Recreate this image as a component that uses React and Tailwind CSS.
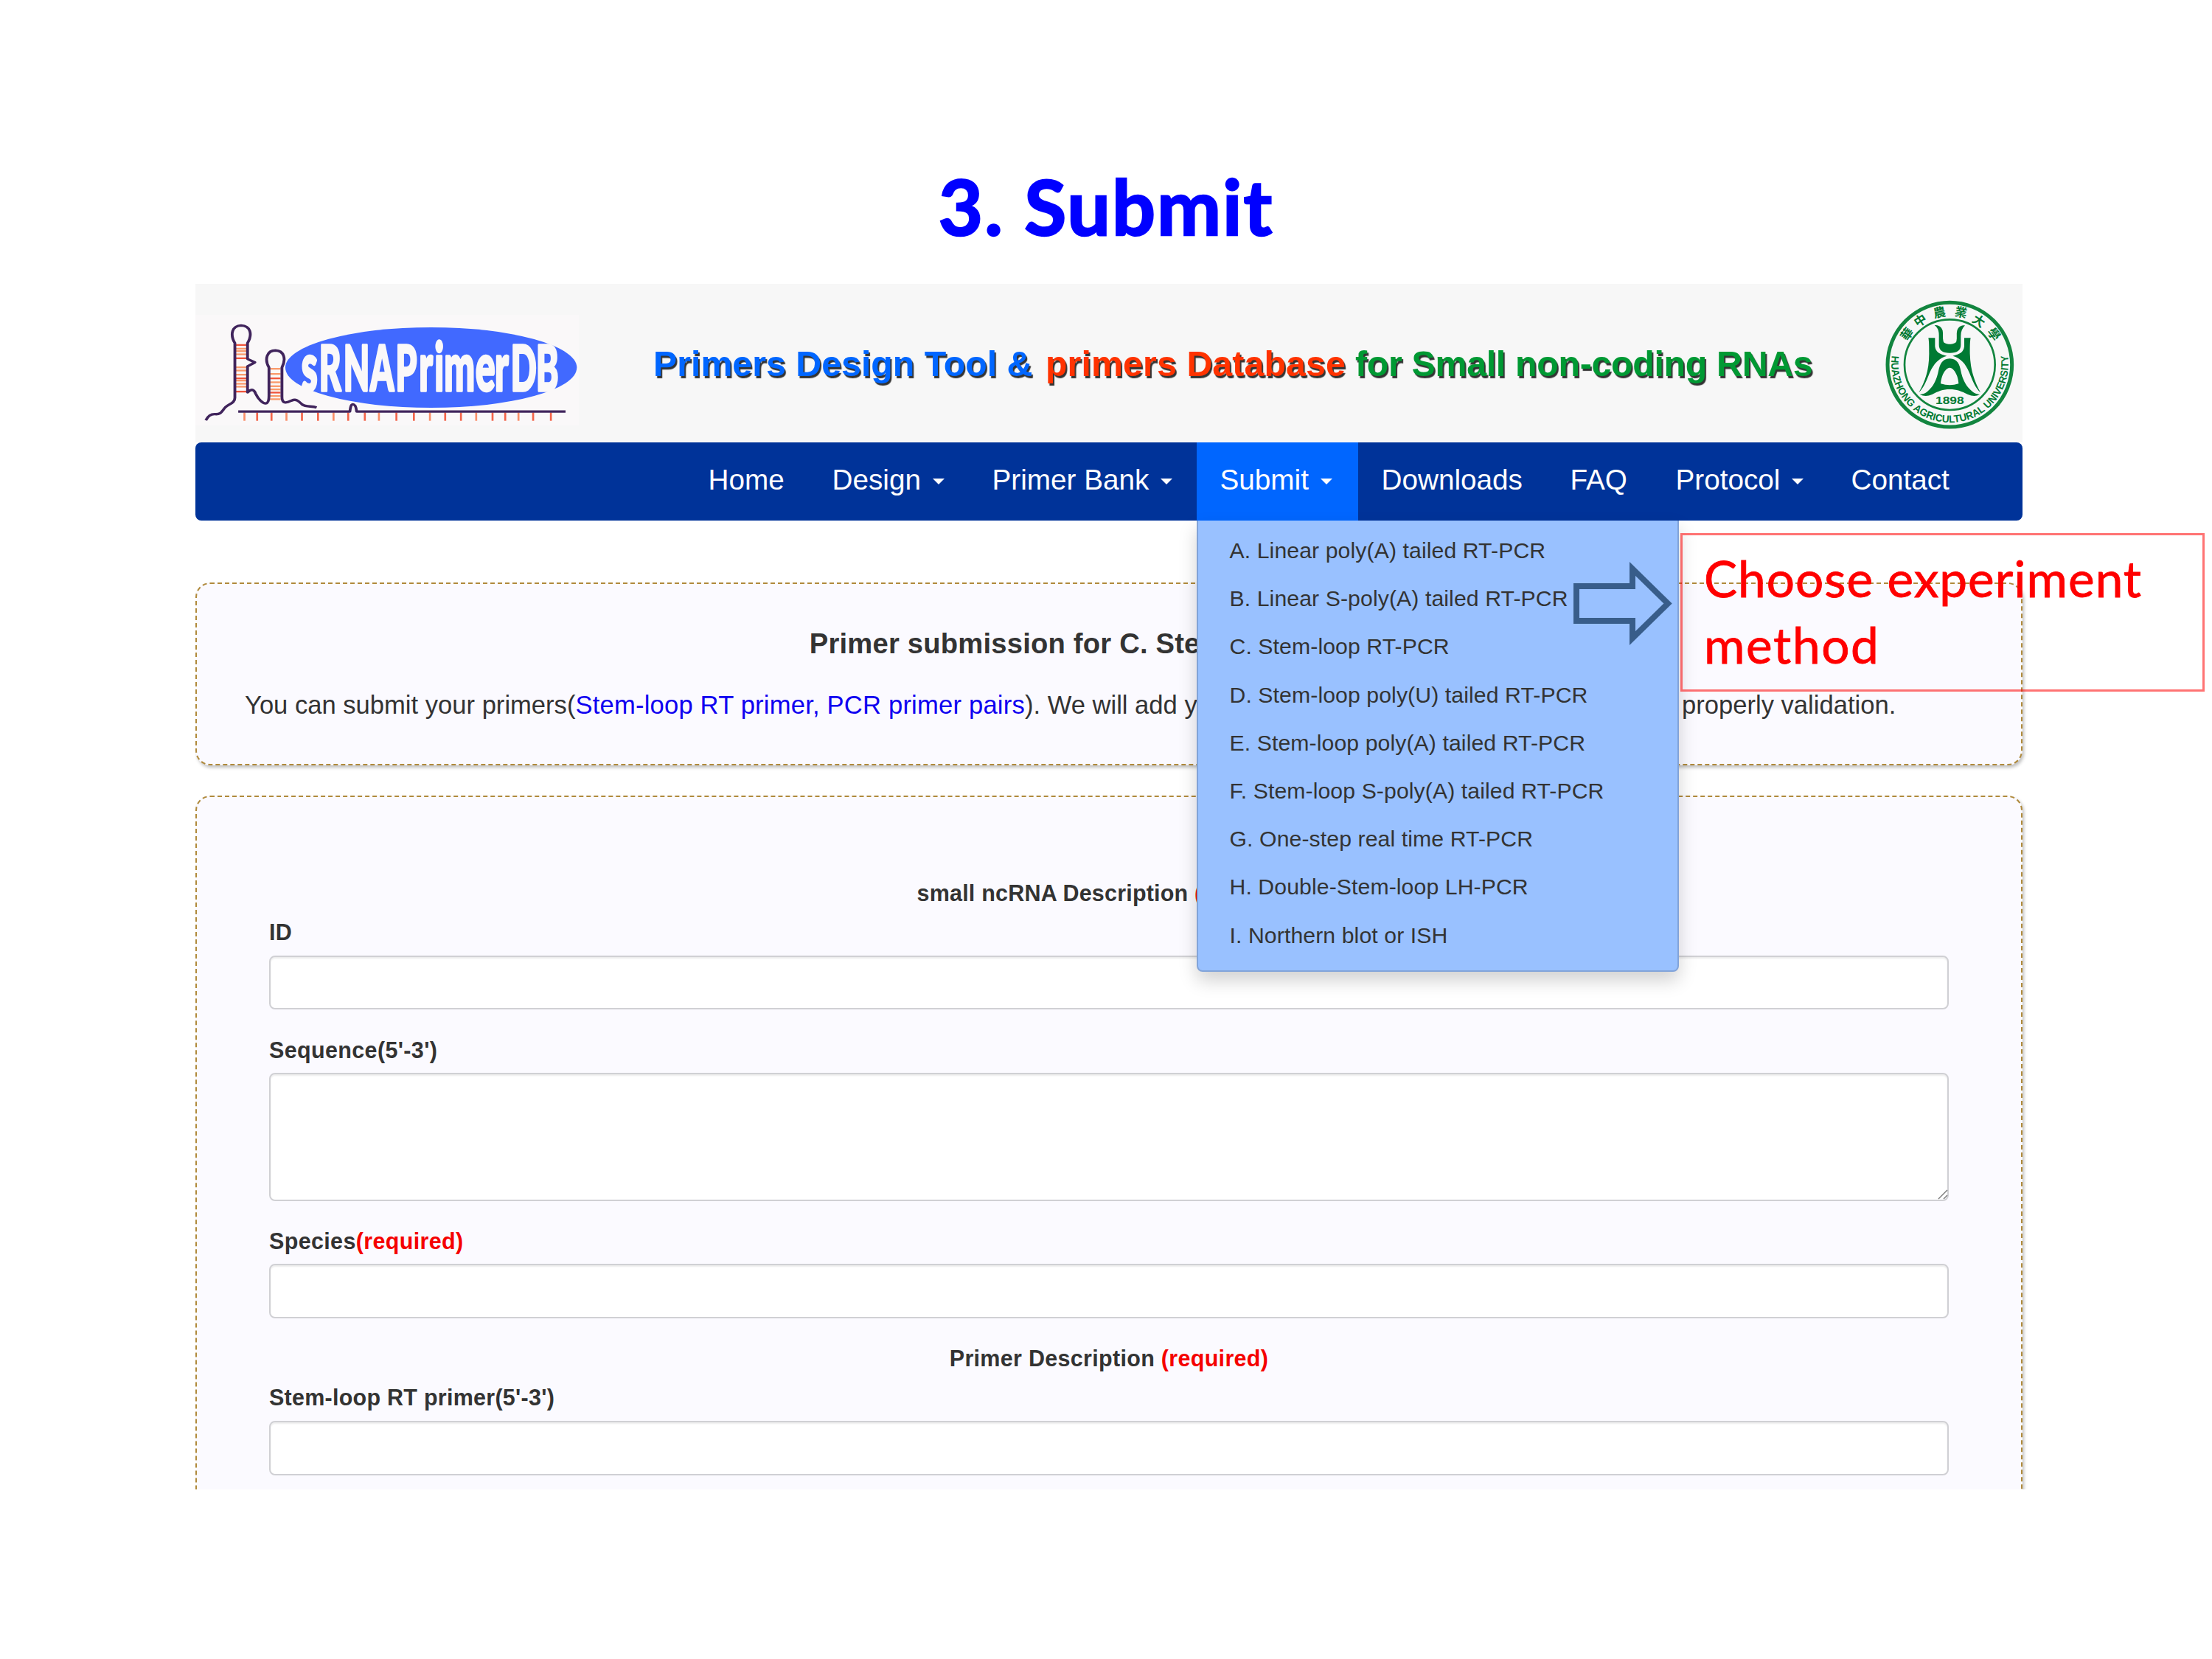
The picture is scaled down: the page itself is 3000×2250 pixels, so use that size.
import React from "react";

const NAV = [
  { label: "Home", box: "w-[168px] pl-[33px]" },
  { label: "Design", caret: true, box: "w-[217px] pl-[33px]" },
  { label: "Primer Bank", caret: true, box: "w-[310px] pl-[33px]" },
  { label: "Submit", caret: true, open: true, box: "w-[219px] pl-[32px]" },
  { label: "Downloads", box: "w-[254px] pl-[32px]" },
  { label: "FAQ", box: "w-[144px] pl-[34px]" },
  { label: "Protocol", caret: true, box: "w-[238px] pl-[33px]" },
  { label: "Contact", box: "w-[200px] pl-[33px]" },
];

const METHODS = [
  "A. Linear poly(A) tailed RT-PCR",
  "B. Linear S-poly(A) tailed RT-PCR",
  "C. Stem-loop RT-PCR",
  "D. Stem-loop poly(U) tailed RT-PCR",
  "E. Stem-loop poly(A) tailed RT-PCR",
  "F. Stem-loop S-poly(A) tailed RT-PCR",
  "G. One-step real time RT-PCR",
  "H. Double-Stem-loop LH-PCR",
  "I. Northern blot or ISH",
];

const TICKS = [212, 257, 308, 361, 416, 473, 528, 580, 639, 689, 751, 813, 870, 924, 980, 1034, 1092, 1137, 1184, 1236, 1299];
const RUNGS_A = [293, 308, 318, 331, 347, 384, 397, 414, 429, 438, 451, 463, 483];
const RUNGS_B = [390, 411, 429, 445, 461, 474, 487, 501, 514];

// Horizontal squeeze of the wordmark and the left edge of each of its letters.
const SQUEEZE = 0.47;
const at = (...xs) => xs.map((x) => x / SQUEEZE).join(" ");

function Logo() {
  return (
    <svg className="block h-[153px] w-[520px]" viewBox="38 170 1360 460" preserveAspectRatio="none">
      <rect x="38" y="170" width="1360" height="450" fill="#faf8f9" />
      <ellipse cx="874" cy="385" rx="517" ry="164" fill="#4169ff" />
      <g strokeWidth="7">
        {RUNGS_A.map((y, i) => (
          <path key={y} d={`M181 ${y}H220`} stroke={i % 4 === 0 ? "#f0553c" : "#fa9a6c"} />
        ))}
        {RUNGS_B.map((y, i) => (
          <path key={y} d={`M303 ${y}H340`} stroke={i % 4 === 2 ? "#f0553c" : "#fa9a6c"} />
        ))}
        {TICKS.map((x, i) => (
          <path key={x} d={`M${x} 568V602`} stroke={i % 3 === 0 ? "#f98e68" : "#f2644a"} />
        ))}
      </g>
      <g fill="none" stroke="#40245c" strokeWidth="10" strokeLinejoin="round">
        <path d="M75 600C84 580 94 574 108 575C130 577 132 562 145 546C158 533 178 530 178 508V285C160 250 168 214 200 213C234 214 241 250 223 285V350L249 364L223 380V486C238 470 246 474 252 492C262 516 277 532 288 531C298 530 299 515 299 500V385C282 350 292 315 322 315C354 316 360 352 345 385V505C345 536 365 528 378 520C398 510 406 524 416 535C432 548 450 540 468 548" />
        <path d="M190 564H586C588 546 590 535 597 535C605 535 608 546 610 564H1351" />
      </g>
      <text
        transform={`scale(${SQUEEZE} 1)`}
        y="480"
        fontSize="256"
        fill="#faf8f9"
        stroke="#faf8f9"
        strokeWidth="11"
        strokeLinejoin="round"
        className="font-['Lato',sans-serif] font-black"
      >
        <tspan x={at(414)} fontSize="276">s</tspan>
        <tspan x={at(477, 563, 658, 748)}>RNAP</tspan>
        <tspan x={at(831, 886, 920, 1032, 1100)} fontSize="276">rimer</tspan>
        <tspan x={at(1157, 1246)}>DB</tspan>
      </text>
    </svg>
  );
}

const SEAL_CHARS = [
  ["華", 318, 220, -54],
  ["中", 372, 165, -34],
  ["農", 450, 132, -11],
  ["業", 538, 132, 11],
  ["大", 610, 167, 33],
  ["學", 672, 221, 54],
];

function Seal() {
  return (
    <svg className="block h-[175px] w-[175px]" viewBox="230 82 525 525">
      <g fill="none" stroke="#12853f">
        <circle cx="492" cy="345" r="253" strokeWidth="15" />
        <circle cx="492" cy="345" r="184" strokeWidth="8" />
      </g>
      <g fill="#007a33">
        <path d="M430 184C445 184 458 189 463 206C466 220 462 236 466 250C471 265 513 265 519 250C523 236 518 220 522 206C527 190 538 185 554 185C543 196 537 210 537 228V264C537 286 522 297 492 297C463 297 448 286 448 264V226C448 205 442 194 430 184Z" />
        <path d="M405 236H432V270C434 292 450 302 480 309C448 318 428 340 412 374C398 406 388 438 366 458C390 416 408 370 408 300C408 270 408 250 405 236Z" />
        <path d="M577 236H551V270C549 292 534 302 504 309C536 318 556 340 570 374C584 406 594 438 617 458C594 416 576 370 574 300C574 270 574 250 577 236Z" />
        <path fillRule="evenodd" d="M492 320C524 321 532 345 537 370C543 400 556 432 583 453C592 462 602 464 614 466C600 474 584 474 566 466C540 453 520 445 492 445C464 445 444 453 420 466C402 474 386 474 370 466C384 464 393 461 402 453C428 432 440 400 446 370C452 345 460 321 492 320ZM492 357C474 358 457 390 455 422C480 430 504 430 528 422C526 390 510 358 492 357Z" />
        <text x="492" y="505" textAnchor="middle" fontSize="42" textLength="116" lengthAdjust="spacingAndGlyphs" className="font-['Liberation_Sans',sans-serif] font-bold">
          1898
        </text>
        {SEAL_CHARS.map(([c, x, y, r]) => (
          <text
            key={c}
            x={x}
            y={y + 18}
            transform={`rotate(${r} ${x} ${y})`}
            textAnchor="middle"
            fontSize="50"
            className="font-['Noto_Sans_CJK_TC',sans-serif] font-bold"
          >
            {c}
          </text>
        ))}
        <path id="seal-arc" d="M257 308A238 238 0 1 0 728 308" fill="none" />
        <text fontSize="42" className="font-['Liberation_Sans',sans-serif] font-bold">
          <textPath href="#seal-arc" textLength="818" lengthAdjust="spacingAndGlyphs">
            HUAZHONG AGRICULTURAL UNIVERSITY
          </textPath>
        </text>
      </g>
    </svg>
  );
}

function Caret() {
  return <span className="ml-[16px] h-0 w-0 border-x-8 border-t-8 border-x-transparent border-t-white" />;
}

function MethodMenu() {
  return (
    <ul className="absolute top-[106px] left-0 z-10 h-[612px] w-[654px] rounded-b-lg border-2 border-t-0 border-black/15 bg-[#99c1ff] pt-[8px] shadow-[0_12px_24px_rgba(0,0,0,0.18)]">
      {METHODS.map((m) => (
        <li key={m} className="h-[65.2px] pl-[43px] text-[30.2px] leading-[65.2px] tracking-[0.1px] whitespace-nowrap text-[#333]">
          {m}
        </li>
      ))}
    </ul>
  );
}

function NavBar() {
  return (
    <nav className="flex h-[106px] w-[2478px] rounded-lg bg-[#003399] pl-[663px]">
      {NAV.map((item) => (
        <div
          key={item.label}
          className={`relative -left-[0.5px] flex h-full items-center text-[38.7px] leading-[54px] whitespace-nowrap text-white ${item.box} ${item.open ? "bg-[#0066ff]" : ""}`}
        >
          <span className="-mt-1">{item.label}</span>
          {item.caret && <Caret />}
          {item.open && <MethodMenu />}
        </div>
      ))}
    </nav>
  );
}

function Required() {
  return <span className="text-[#f50000]">(required)</span>;
}

const PANEL = "w-[2478px] rounded-[20px] border-2 border-dashed border-[#b08a3c] bg-[#fbfaff] shadow-[2px_3px_4px_rgba(0,0,0,0.25)]";
const TEXT = "block h-[40px] text-[30.5px] font-bold leading-[40px] whitespace-nowrap";
const LABEL = `${TEXT} tracking-[0.35px]`;
const HEADING = `${TEXT} tracking-[0.3px] text-center`;
const FIELD = "block w-[2278px] rounded-lg border-2 border-[#d0d0d4] bg-white shadow-[inset_0_2px_2px_rgba(0,0,0,0.075)] outline-none resize-none";

export default function App() {
  return (
    <div className="relative h-[2250px] w-[3000px] overflow-hidden bg-white font-['Liberation_Sans',Arial,sans-serif] text-[#333]">
      <h1 className="flex h-[385px] justify-center pt-[219px] font-['Lato',sans-serif] text-[104px] leading-[120px] font-bold tracking-[2px] text-[#0000ff] [-webkit-text-stroke:2.5px_#0000ff]">
        <span>3. Submit</span>
      </h1>

      <div className="ml-[265px] h-[1635px] w-[2486px] overflow-hidden">
        <header className="flex h-[215px] w-[2478px] bg-[#f7f7f7]">
          <div className="mt-[42px] w-[621px]">
            <Logo />
          </div>
          <div className="flex pt-[79px] text-[48.3px] leading-[58px] font-bold whitespace-pre [text-shadow:2px_3px_1px_#333]">
            <span className="w-[532px] text-[#0066ff]">Primers Design Tool &amp;</span>
            <span className="w-[420px] tracking-[0.1px] text-[#ff3300]">primers Database</span>
            <span className="tracking-[-0.3px] text-[#009933]">for Small non-coding RNAs</span>
          </div>
          <div className="mt-[22px] ml-auto mr-[11px]">
            <Seal />
          </div>
        </header>

        <NavBar />

        <section className={`mt-[84px] h-[248px] pt-[55px] ${PANEL}`}>
          <h2 className="text-center text-[38.2px] leading-[52px] font-bold tracking-[0.2px]">Primer submission for C. Stem-loop RT-PCR</h2>
          <p className="mt-[32px] flex pl-[65px] text-[34.6px] leading-[50px] whitespace-pre">
            <span className="w-[1949px]">
              You can submit your primers(<span className="tracking-[0.2px] text-[#0f00f0]">Stem-loop RT primer, PCR primer pairs</span>
              ). We will add your primers to our database after
            </span>
            <span>properly validation.</span>
          </p>
        </section>

        <section className={`mt-[41px] h-[1000px] px-[98px] pt-[110px] ${PANEL}`}>
          <h3 className={`${TEXT} text-center tracking-[0.2px]`}>
            small ncRNA Description <Required />
          </h3>
          <label className={`mt-[13px] ${LABEL}`}>ID</label>
          <input className={`mt-[12px] h-[73px] ${FIELD}`} />
          <label className={`mt-[35px] ${LABEL}`}>Sequence(5'-3')</label>
          <div className="relative mt-[11px]">
            <textarea className={`h-[174px] ${FIELD}`} />
            <svg className="absolute right-[1px] bottom-[2px] h-[14px] w-[14px]" viewBox="0 0 14 14" fill="none" stroke="#777" strokeWidth="1.4">
              <path d="M1 13L13 1M8 13L13 8" />
            </svg>
          </div>
          <label className={`mt-[34px] ${LABEL}`}>
            Species
            <Required />
          </label>
          <input className={`mt-[11px] h-[74px] ${FIELD}`} />
          <h3 className={`mt-[34px] ${HEADING}`}>
            Primer Description <Required />
          </h3>
          <label className={`mt-[13px] ${TEXT} tracking-[0.25px]`}>Stem-loop RT primer(5'-3')</label>
          <input className={`mt-[12px] h-[74px] ${FIELD}`} />
        </section>
      </div>

      <svg className="absolute top-[755px] left-[2124px] z-20 h-[126px] w-[150px]" viewBox="2124 755 150 126">
        <path d="M2138 795H2214V771.5L2262 818.5L2214 865.5V842H2138Z" fill="none" stroke="#385d8a" strokeWidth="8" />
      </svg>

      <div className="absolute top-[723px] left-[2279px] z-20 h-[215px] w-[711px] border-[3px] border-[#ff0000]/55 pt-[13px] pl-[29px] font-['Lato',sans-serif] text-[67.5px] leading-[90px] tracking-[1px] whitespace-nowrap text-[#ff0000] [-webkit-text-stroke:0.8px_#ff0000]">
        <div>Choose experiment</div>
        <div className="tracking-[1.6px]">method</div>
      </div>
    </div>
  );
}
